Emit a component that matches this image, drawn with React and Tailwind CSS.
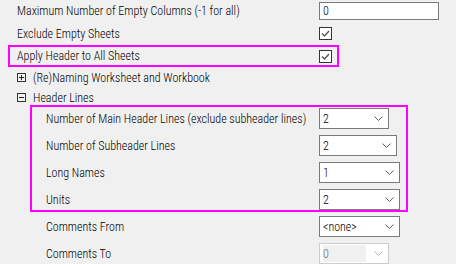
const Chevron = ({ disabled }) => (
  <svg width="9" height="5" viewBox="0 0 9 5" className="shrink-0">
    <path d="M0.5 0.5 L4.5 4.5 L8.5 0.5" fill="none" stroke={disabled ? "#b4b4b4" : "#606060"} strokeWidth="1" />
  </svg>
);

const Dropdown = ({ value, w, disabled = false }) => (
  <div
    className={`${w} flex items-center h-[21px] border bg-white pl-[3px] pr-[5px] ${
      disabled ? "border-[#cccccc]" : "border-[#7a7a7a]"
    }`}
  >
    {disabled ? (
      <span className="flex-1 h-[17px] mr-[8px] bg-[#f0f0f0] text-[#6d6d6d] flex items-center">{value}</span>
    ) : (
      <span className="flex-1">{value}</span>
    )}
    <Chevron disabled={disabled} />
  </div>
);

const Checkbox = () => (
  <div className="w-[13px] h-[13px] border border-[#333333] bg-white flex items-center justify-center">
    <svg width="11" height="11" viewBox="0 0 11 11">
      <path d="M2 5.5 L4.5 8 L9 3" fill="none" stroke="#555555" strokeWidth="1.3" />
    </svg>
  </div>
);

// tree expander box (+ / -)
const Toggle = ({ open }) => (
  <div className="w-[9px] h-[9px] border border-[#333333] relative mr-[7px] shrink-0">
    <div className="absolute left-[1px] right-[1px] top-[3px] h-[1px] bg-[#222222]" />
    {!open && <div className="absolute top-[1px] bottom-[1px] left-[3px] w-[1px] bg-[#222222]" />}
  </div>
);

const Row = ({ label, children }) => (
  <div className="flex items-center">
    <div className="w-[273px] shrink-0">{label}</div>
    {children}
  </div>
);

export default function App() {
  return (
    <div className="w-[456px] h-[264px] bg-[#f0f0f0] overflow-hidden text-[12px] text-black font-light leading-none font-['Roboto_Condensed',sans-serif]">
      {/* top options */}
      <div className="h-[22px] flex items-start pt-[2px] pl-[17px]">
        <div className="w-[302px] h-[18px] flex items-center">Maximum Number of Empty Columns (-1 for all)</div>
        <div className="w-[120px] h-[18px] border border-[#7a7a7a] bg-white flex items-center pl-[3px]">0</div>
      </div>
      <div className="h-[23px] flex items-center pl-[17px]">
        <div className="w-[302px]">Exclude Empty Sheets</div>
        <Checkbox />
      </div>
      <div className="ml-[8px] w-[331px] h-[22px] border-2 border-[#ff00ff] flex items-center pl-[7px]">
        <div className="w-[302px]">Apply Header to All Sheets</div>
        <Checkbox />
      </div>
      <div className="h-[21px] flex items-center pl-[17px]">
        <Toggle />
        <span>(Re)Naming Worksheet and Workbook</span>
      </div>
      <div className="h-[17px] flex items-start pt-[5px] pl-[17px]">
        <Toggle open />
        <span className="-mt-[1px]">Header Lines</span>
      </div>

      {/* header lines group */}
      <div className="ml-[30px] w-[378px] border-2 border-[#ff00ff] pt-[1px] pl-[14px] flex flex-col gap-[6px]">
        <Row label="Number of Main Header Lines (exclude subheader lines)">
          <Dropdown value="2" w="w-[70px]" />
        </Row>
        <Row label="Number of Subheader Lines">
          <Dropdown value="2" w="w-[78px]" />
        </Row>
        <Row label="Long Names">
          <Dropdown value="1" w="w-[81px]" />
        </Row>
        <Row label="Units">
          <Dropdown value="2" w="w-[81px]" />
        </Row>
      </div>

      <div className="pl-[46px] pt-[4px] flex flex-col gap-[6px]">
        <Row label="Comments From">
          <Dropdown value="<none>" w="w-[81px]" />
        </Row>
        <Row label="Comments To">
          <Dropdown value="0" w="w-[70px]" disabled />
        </Row>
      </div>
    </div>
  );
}
